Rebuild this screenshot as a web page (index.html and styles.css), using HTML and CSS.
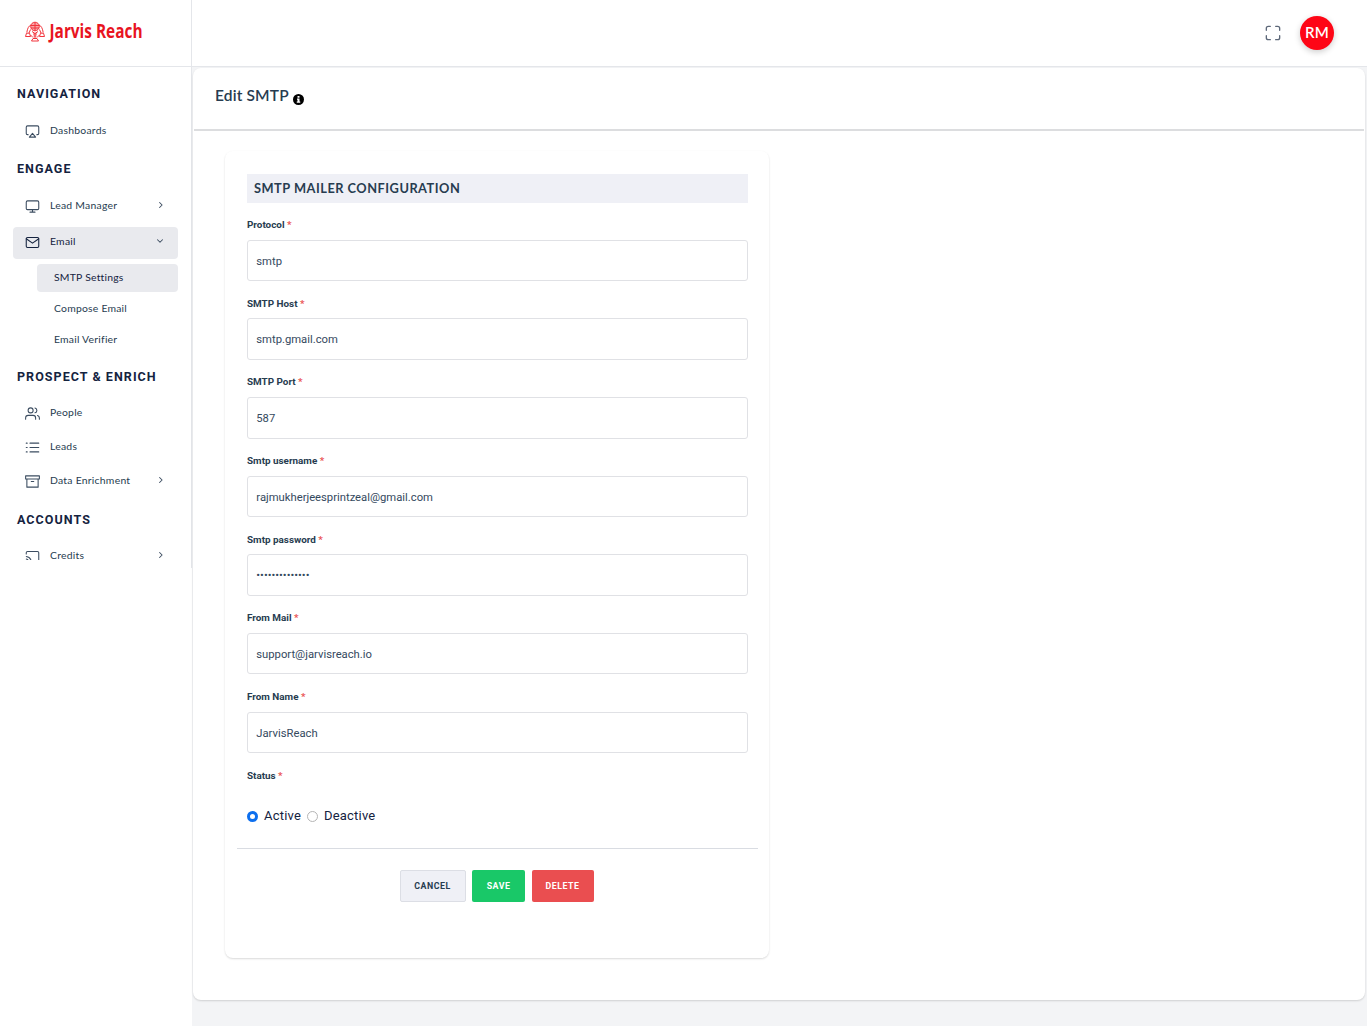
FILE: index.html
```
<!DOCTYPE html>
<html lang="en">

<head>
    <meta charset="utf-8">
    <title>Edit SMTP</title>
    <link rel="stylesheet" href="styles.css">
</head>

<body>

    <aside class="sidebar">
        <div class="brand">
            <svg width="124" height="28" viewBox="0 0 124 28">
                <g fill="none" stroke="#f2343c" stroke-width="1">
                    <circle cx="11" cy="6.500" r="4.300" fill="#f9a5a8" />
                    <path d="M7 5.500h8M7 8h8M11 2.500v8M8 11.500l3 2 3-2M9 14h4M9.500 16h3M11 13v6" />
                    <path d="M7 5C4.500 6 3.500 8.500 2.800 12.500M15 5c2.500 1 3.500 3.500 4.200 7.500M6.500 9.500L5 13M15.500 9.500L17 13" />
                    <path d="M1.500 16.500l1-3.300h3l1 3.300zM15.500 16.500l1-3.300h3l1 3.300zM6.500 15l2.500 2.500M15.500 15L13 17.500M9 18.500h4l1.500 2.500h-7z" />
                </g>
                <text x="25.500" y="18" class="brand-text" textLength="93" lengthAdjust="spacingAndGlyphs">Jarvis Reach</text>
            </svg>
        </div>

        <nav class="menu">
            <div class="menu-scroll">
                <h5>NAVIGATION</h5>
                <ul>
                    <li class="item">
                        <svg class="icon" viewBox="0 0 24 24"><path d="M5 17H4a2 2 0 0 1-2-2V5a2 2 0 0 1 2-2h16a2 2 0 0 1 2 2v10a2 2 0 0 1-2 2h-1" /><path d="M12 15l5 6H7z" /></svg>
                        <span>Dashboards</span>
                    </li>
                </ul>

                <h5>ENGAGE</h5>
                <ul class="engage">
                    <li class="item">
                        <svg class="icon" viewBox="0 0 24 24"><rect x="2" y="3" width="20" height="14" rx="2" /><path d="M8 21h8M12 17v4" /></svg>
                        <span>Lead Manager</span>
                        <svg class="arrow" viewBox="0 0 24 24"><path d="M11 18l6-6-6-6" /></svg>
                    </li>
                    <li class="item active">
                        <svg class="icon" viewBox="0 0 24 24"><rect x="2" y="4" width="20" height="16" rx="2" /><path d="M22 6l-10 7L2 6" /></svg>
                        <span>Email</span>
                        <svg class="arrow" viewBox="0 0 24 24"><path d="M6 9l6 6 6-6" /></svg>
                    </li>
                </ul>
                <ul class="submenu">
                    <li class="active">SMTP Settings</li>
                    <li>Compose Email</li>
                    <li>Email Verifier</li>
                </ul>

                <h5 class="low">PROSPECT &amp; ENRICH</h5>
                <ul>
                    <li class="item">
                        <svg class="icon" viewBox="0 0 24 24"><path d="M17 21v-2a4 4 0 0 0-4-4H5a4 4 0 0 0-4 4v2" /><circle cx="9" cy="7" r="4" /><path d="M23 21v-2a4 4 0 0 0-3-3.870M16 3.130a4 4 0 0 1 0 7.750" /></svg>
                        <span>People</span>
                    </li>
                    <li class="item">
                        <svg class="icon" viewBox="0 0 24 24"><path d="M8 5h14M8 12h14M8 19h14M2 5h1.500M2 12h1.500M2 19h1.500" /></svg>
                        <span>Leads</span>
                    </li>
                    <li class="item">
                        <svg class="icon" viewBox="0 0 24 24"><path d="M21 8v13H3V8M1 3h22v5H1zM10 12h4" /></svg>
                        <span>Data Enrichment</span>
                        <svg class="arrow" viewBox="0 0 24 24"><path d="M11 18l6-6-6-6" /></svg>
                    </li>
                </ul>

                <h5 class="low">ACCOUNTS</h5>
                <ul>
                    <li class="item">
                        <svg class="icon" viewBox="0 0 24 24"><path d="M2 16.100A5 5 0 0 1 5.900 20M2 12.050A9 9 0 0 1 9.950 20M2 8V6a2 2 0 0 1 2-2h16a2 2 0 0 1 2 2v12a2 2 0 0 1-2 2h-6M2 20h.01" /></svg>
                        <span>Credits</span>
                        <svg class="arrow" viewBox="0 0 24 24"><path d="M11 18l6-6-6-6" /></svg>
                    </li>
                </ul>
            </div>
        </nav>
    </aside>

    <div class="page">
        <header class="topbar">
            <svg class="fullscreen" viewBox="0 0 24 24"><path d="M8 2H5a3 3 0 0 0-3 3v3M16 2h3a3 3 0 0 1 3 3v3M8 22H5a3 3 0 0 1-3-3v-3M16 22h3a3 3 0 0 0 3-3v-3" /></svg>
            <div class="avatar">RM</div>
        </header>

        <main class="panel">
            <div class="panel-head">
                <h4>Edit SMTP</h4>
                <svg class="info" width="11" height="11" viewBox="0 0 22 22"><circle cx="11" cy="11" r="11" /><path d="M9 4h4v3.500H9zM8 9h5v6h1.500v2.500h-7V15H9v-3.500H8z" fill="#fff" /></svg>
            </div>

            <form class="card">
                <h3>SMTP MAILER CONFIGURATION</h3>

                <div class="field">
                    <label for="protocol">Protocol <b>*</b></label>
                    <input type="text" id="protocol" value="smtp">
                </div>
                <div class="field">
                    <label for="host">SMTP Host <b>*</b></label>
                    <input type="text" id="host" value="smtp.gmail.com">
                </div>
                <div class="field">
                    <label for="port">SMTP Port <b>*</b></label>
                    <input type="text" id="port" value="587">
                </div>
                <div class="field">
                    <label for="username">Smtp username <b>*</b></label>
                    <input type="text" id="username" value="rajmukherjeesprintzeal@gmail.com">
                </div>
                <div class="field">
                    <label for="password">Smtp password <b>*</b></label>
                    <input type="password" id="password" value="abcdefghijklmn">
                </div>
                <div class="field">
                    <label for="frommail">From Mail <b>*</b></label>
                    <input type="text" id="frommail" value="support@jarvisreach.io">
                </div>
                <div class="field">
                    <label for="fromname">From Name <b>*</b></label>
                    <input type="text" id="fromname" value="JarvisReach">
                </div>
                <div class="field status">
                    <label>Status <b>*</b></label>
                    <div class="radios">
                        <input type="radio" name="status" id="active" checked>
                        <label for="active">Active</label>
                        <input type="radio" name="status" id="deactive">
                        <label for="deactive">Deactive</label>
                    </div>
                </div>

                <div class="actions">
                    <button type="button" class="btn cancel">CANCEL</button>
                    <button type="button" class="btn save">SAVE</button>
                    <button type="button" class="btn delete">DELETE</button>
                </div>
            </form>
        </main>
    </div>

</body>

</html>
```

FILE: styles.css
```
* {
    box-sizing: border-box;
}

body {
    margin: 0;
    height: 1026px;
    display: flex;
    overflow: hidden;
    background: #f3f4f6;
    color: #273c50;
    font-family: Roboto, sans-serif;
}

h3,
h4,
h5,
ul {
    margin: 0;
    padding: 0;
    list-style: none;
}

/* sidebar */

.sidebar {
    width: 192px;
    height: 1026px;
    flex: none;
    background: #fff;
}

.brand {
    height: 67px;
    padding: 20px 0 0 24px;
    border-right: 1px solid #e4e6ea;
    border-bottom: 1px solid #e4e6ea;
}

.brand svg {
    display: block;
    overflow: visible;
}

.brand-text {
    font: bold 19px "Open Sans", sans-serif;
    fill: #e8141f;
}

.menu {
    height: 501px;
    border-right: 1px solid #e4e6ea;
}

.menu-scroll {
    height: 493px;
    padding: 6px 13px 0;
    overflow: hidden;
}

.menu h5 {
    height: 20px;
    margin: 11px 0 12px 4px;
    font-size: 12.5px;
    font-weight: 700;
    line-height: 20px;
    letter-spacing: 1.05px;
    color: #15233f;
    white-space: nowrap;
}

.menu h5.low {
    line-height: 22px;
}

.menu ul {
    display: flex;
    flex-direction: column;
    gap: 2px;
}

.menu .engage {
    gap: 4px;
}

.item {
    display: flex;
    align-items: center;
    height: 32px;
    padding: 0 13px 0 12px;
    border-radius: 4px;
    font-family: Lato, sans-serif;
    font-size: 10.4px;
    line-height: 12px;
    letter-spacing: 0.25px;
}

.item span {
    margin: 0 auto 4px 10px;
}

.icon,
.arrow,
.fullscreen {
    fill: none;
    stroke: #3b4c60;
    stroke-width: 1.7;
    stroke-linejoin: round;
    stroke-linecap: round;
}

.icon {
    width: 15px;
    height: 15px;
    margin-bottom: 2px;
}

.arrow {
    width: 10px;
    height: 10px;
    margin-bottom: 4px;
    stroke-width: 2.5;
}

.item.active,
.submenu .active {
    background: #e9eaee;
    color: #15233f;
}

.item.active .icon {
    stroke: #15233f;
}

.menu .submenu {
    gap: 3px;
    margin: 5px 0 12px 24px;
}

.submenu li {
    height: 28px;
    padding-left: 17px;
    border-radius: 4px;
    font-family: Lato, sans-serif;
    font-size: 10.4px;
    line-height: 26px;
    letter-spacing: 0.22px;
}

/* top bar */

.page {
    flex: 1;
}

.topbar {
    display: flex;
    align-items: center;
    justify-content: flex-end;
    gap: 19px;
    height: 67px;
    padding-right: 33px;
    background: #fff;
    border-bottom: 1px solid #e4e6ea;
}

.fullscreen {
    width: 16px;
    height: 16px;
    stroke: #5d6879;
    stroke-width: 2;
}

.avatar {
    width: 34px;
    height: 34px;
    border-radius: 50%;
    background: #fe0616;
    box-shadow: 0 2px 6px rgba(0, 0, 0, 0.2);
    color: #fff;
    font: 600 15px/33px Lato, sans-serif;
    letter-spacing: 0.2px;
    text-align: center;
}

/* content */

.panel {
    height: 932px;
    margin: 1px 2px 0 1px;
    background: #fff;
    border-radius: 8px;
    box-shadow: 0 1px 2px rgba(0, 0, 0, 0.15);
}

.panel-head {
    display: flex;
    height: 63px;
    margin: 0 1px;
    padding: 17px 0 0 21px;
    border-bottom: 2px solid #dcdddf;
}

.panel-head h4 {
    font: 600 15.5px/20px Lato, sans-serif;
    letter-spacing: 0.15px;
}

.info {
    margin: 8.5px 0 0 4px;
}

.card {
    width: 544px;
    height: 807px;
    margin: 20px 0 0 32px;
    padding: 23px 21px 0 22px;
    border-radius: 8px;
    box-shadow: 0 1px 2px rgba(0, 0, 0, 0.15);
}

.card h3 {
    height: 29px;
    margin-bottom: 14px;
    padding-left: 7px;
    background: #eff0f6;
    font: bold 12.8px/29px Lato, sans-serif;
    letter-spacing: 0.5px;
}

.field {
    height: 78.67px;
}

.field > label {
    display: block;
    height: 22.7px;
    font-size: 9.9px;
    font-weight: 700;
    line-height: 15px;
}

.field b {
    color: #ea5455;
    font-weight: 700;
}

.field input[type=text],
.field input[type=password] {
    display: block;
    width: 100%;
    height: 41.5px;
    padding: 1.5px 8.3px 0;
    border: 1px solid #e0e1e5;
    border-radius: 3px;
    background: #fff;
    color: #34495e;
    font: 11.25px Roboto, sans-serif;
}

.field.status {
    height: 80px;
}

.radios {
    display: flex;
    align-items: center;
    padding-top: 15.6px;
    font-size: 13px;
    line-height: 20px;
    letter-spacing: 0.2px;
    color: #15233f;
}

.radios input {
    appearance: none;
    width: 11px;
    height: 11px;
    margin: 1px 6px 0 0;
    border: 1px solid #b5b5b5;
    border-radius: 50%;
}

.radios input:checked {
    border: 3px solid #0d6fee;
}

.radios label {
    margin-right: 6px;
}

.actions {
    display: flex;
    justify-content: center;
    gap: 6.5px;
    margin: 0 -10px;
    padding: 21px 2px 0 0;
    border-top: 1px solid #d9dce2;
}

.btn {
    height: 32px;
    padding: 0;
    border: none;
    border-radius: 2px;
    color: #fff;
    font: bold 8.8px Roboto, sans-serif;
    letter-spacing: 0.5px;
}

.btn.cancel {
    width: 66px;
    border: 1px solid #dcdee5;
    background: #eff0f6;
    color: #273c50;
}

.btn.save {
    width: 53px;
    background: #19c868;
}

.btn.delete {
    width: 62px;
    background: #ea4e50;
}
```
